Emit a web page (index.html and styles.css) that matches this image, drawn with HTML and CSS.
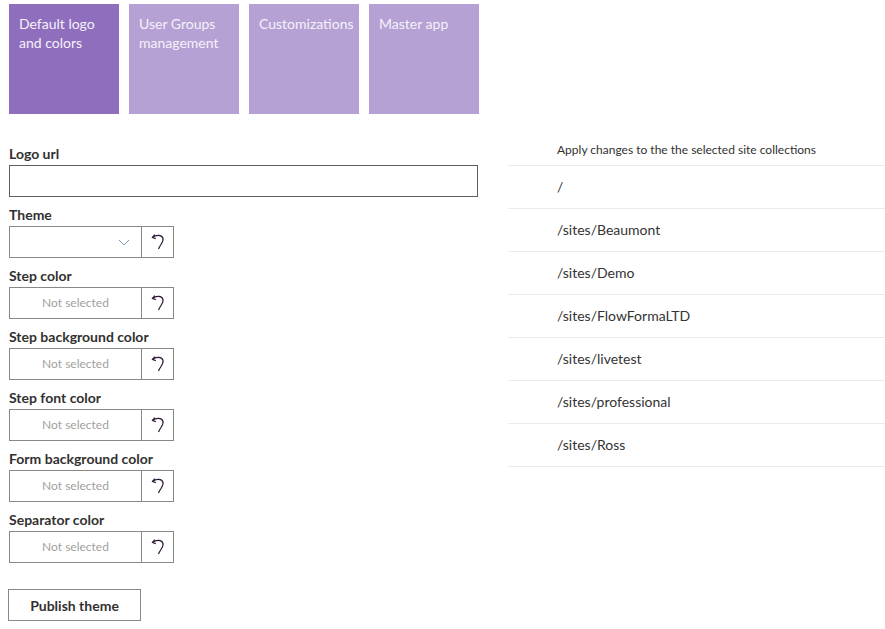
FILE: index.html
```html
<!DOCTYPE html>
<html lang="en">
  <head>
    <meta charset="UTF-8" />
    <title>Theme settings</title>
    <link rel="stylesheet" href="styles.css">
  </head>
  <body>
    <nav class="tiles">
      <a href="#" class="tile tile-active">Default logo and colors</a>
      <a href="#" class="tile">User Groups management</a>
      <a href="#" class="tile">Customizations</a>
      <a href="#" class="tile">Master app</a>
    </nav>

    <main class="content">
      <section class="form">
        <label class="field-label">Logo url</label>
        <input type="text" class="text-input">

        <label class="field-label">Theme</label>
        <div class="picker-row">
          <div class="picker dropdown">
            <svg class="chevron" width="12" height="7" viewBox="0 0 12 7"><path d="M1 1 L6 6 L11 1" fill="none" stroke="#7d93b0" stroke-width="1"/></svg>
          </div>
          <button class="undo-btn"><svg width="16" height="20" viewBox="0 0 16 20"><path d="M2.5 5.5 C6 2.5 12 2.5 13 6.5 C13.8 10 10.5 12 8.5 17" fill="none" stroke="#2e1838" stroke-width="1.2"/><path d="M4.8 2.6 L2.5 5.5 L5.8 6.6" fill="none" stroke="#2e1838" stroke-width="1.2"/></svg></button>
        </div>

        <label class="field-label">Step color</label>
        <div class="picker-row">
          <div class="picker">Not selected</div>
          <button class="undo-btn"><svg width="16" height="20" viewBox="0 0 16 20"><path d="M2.5 5.5 C6 2.5 12 2.5 13 6.5 C13.8 10 10.5 12 8.5 17" fill="none" stroke="#2e1838" stroke-width="1.2"/><path d="M4.8 2.6 L2.5 5.5 L5.8 6.6" fill="none" stroke="#2e1838" stroke-width="1.2"/></svg></button>
        </div>

        <label class="field-label">Step background color</label>
        <div class="picker-row">
          <div class="picker">Not selected</div>
          <button class="undo-btn"><svg width="16" height="20" viewBox="0 0 16 20"><path d="M2.5 5.5 C6 2.5 12 2.5 13 6.5 C13.8 10 10.5 12 8.5 17" fill="none" stroke="#2e1838" stroke-width="1.2"/><path d="M4.8 2.6 L2.5 5.5 L5.8 6.6" fill="none" stroke="#2e1838" stroke-width="1.2"/></svg></button>
        </div>

        <label class="field-label">Step font color</label>
        <div class="picker-row">
          <div class="picker">Not selected</div>
          <button class="undo-btn"><svg width="16" height="20" viewBox="0 0 16 20"><path d="M2.5 5.5 C6 2.5 12 2.5 13 6.5 C13.8 10 10.5 12 8.5 17" fill="none" stroke="#2e1838" stroke-width="1.2"/><path d="M4.8 2.6 L2.5 5.5 L5.8 6.6" fill="none" stroke="#2e1838" stroke-width="1.2"/></svg></button>
        </div>

        <label class="field-label">Form background color</label>
        <div class="picker-row">
          <div class="picker">Not selected</div>
          <button class="undo-btn"><svg width="16" height="20" viewBox="0 0 16 20"><path d="M2.5 5.5 C6 2.5 12 2.5 13 6.5 C13.8 10 10.5 12 8.5 17" fill="none" stroke="#2e1838" stroke-width="1.2"/><path d="M4.8 2.6 L2.5 5.5 L5.8 6.6" fill="none" stroke="#2e1838" stroke-width="1.2"/></svg></button>
        </div>

        <label class="field-label">Separator color</label>
        <div class="picker-row">
          <div class="picker">Not selected</div>
          <button class="undo-btn"><svg width="16" height="20" viewBox="0 0 16 20"><path d="M2.5 5.5 C6 2.5 12 2.5 13 6.5 C13.8 10 10.5 12 8.5 17" fill="none" stroke="#2e1838" stroke-width="1.2"/><path d="M4.8 2.6 L2.5 5.5 L5.8 6.6" fill="none" stroke="#2e1838" stroke-width="1.2"/></svg></button>
        </div>

        <button class="publish-btn">Publish theme</button>
      </section>

      <section class="sites">
        <div class="sites-header">Apply changes to the the selected site collections</div>
        <div class="site-row">/</div>
        <div class="site-row">/sites/Beaumont</div>
        <div class="site-row">/sites/Demo</div>
        <div class="site-row">/sites/FlowFormaLTD</div>
        <div class="site-row">/sites/livetest</div>
        <div class="site-row">/sites/professional</div>
        <div class="site-row">/sites/Ross</div>
      </section>
    </main>
  </body>
</html>
```

FILE: styles.css
```css
/* General Styling */
* {
  margin: 0;
  padding: 0;
  box-sizing: border-box;
}

body {
  font-family: "Segoe UI", Lato, "Liberation Sans", sans-serif;
  font-size: 14px;
  color: #323130;
  background: white;
  padding: 4px 0 0 9px;
}

/* Tiles */
.tiles {
  display: flex;
  gap: 10px;
}

.tile {
  width: 110px;
  height: 110px;
  padding: 10px 10px;
  background-color: #b5a1d3;
  color: #f5f1fb;
  text-decoration: none;
  font-size: 14px;
  line-height: 19px;
}

.tile-active {
  background-color: #8f6fbd;
}

/* Main area */
.content {
  display: flex;
  margin-top: 20px;
}

.form {
  width: 469px;
  margin-right: 30px;
  padding-top: 2px;
  display: flex;
  flex-direction: column;
  align-items: flex-start;
}

.field-label {
  display: block;
  font-weight: bold;
  line-height: 20px;
  padding: 8px 0 1px;
}

.text-input {
  width: 469px;
  height: 32px;
  border: 1px solid #605e5c;
  outline: none;
}

.picker-row {
  display: flex;
}

.picker {
  width: 133px;
  height: 32px;
  border: 1px solid #8a8886;
  padding-bottom: 2px;
  display: flex;
  align-items: center;
  justify-content: center;
  font-size: 12px;
  color: #a19f9d;
}

.dropdown {
  justify-content: flex-end;
  padding-right: 11px;
  padding-bottom: 0;
}

.undo-btn {
  width: 32px;
  height: 32px;
  border: 1px solid #8a8886;
  border-left: none;
  background: white;
  display: flex;
  align-items: center;
  justify-content: center;
}

.publish-btn {
  margin-top: 26px;
  margin-left: -1px;
  width: 133px;
  height: 32px;
  border: 1px solid #8a8886;
  background: white;
  font-family: inherit;
  font-size: 14px;
  font-weight: bold;
  color: #323130;
}

/* Site collections */
.sites {
  flex: 1;
}

.sites-header {
  height: 32px;
  padding-left: 49px;
  font-size: 12px;
  line-height: 31px;
  color: #323130;
  border-bottom: 1px solid #edebe9;
}

.site-row {
  height: 43px;
  padding-left: 49px;
  line-height: 42px;
  color: #333;
  border-bottom: 1px solid #edebe9;
}
```
